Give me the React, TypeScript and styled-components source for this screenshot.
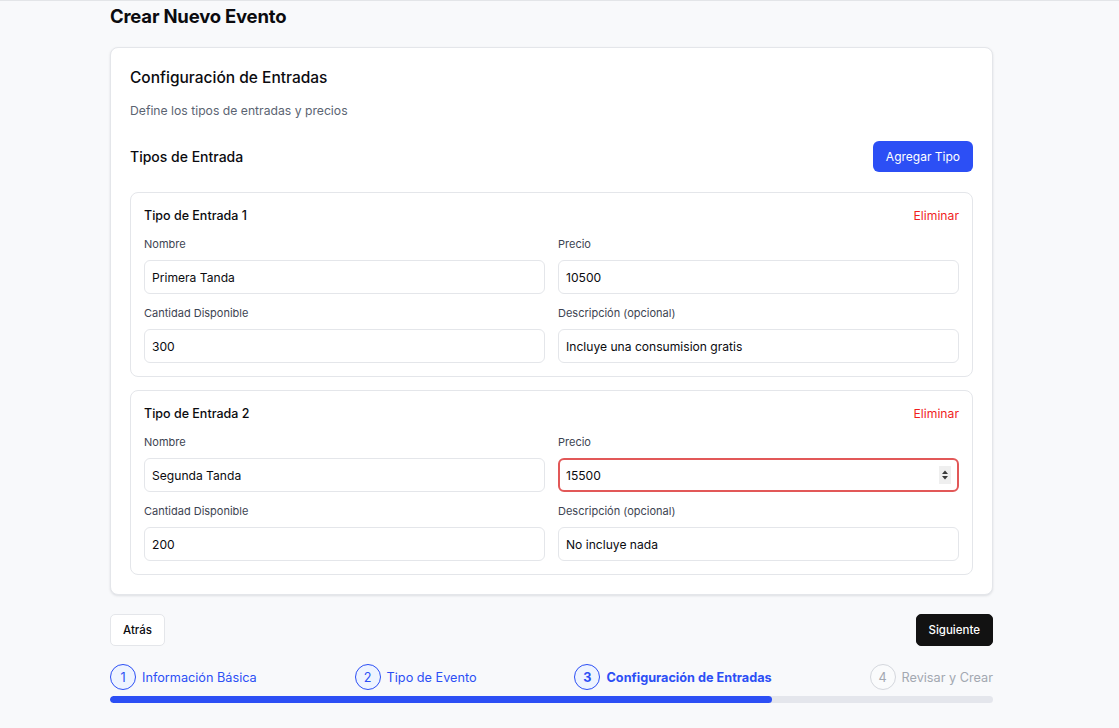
import React from "react";
import styled, { createGlobalStyle } from "styled-components";

const Global = createGlobalStyle`
  html, body { margin: 0; padding: 0; }
  body {
    background: #f8f9fb;
    border-top: 1px solid #e3e5e8;
    font-family: Inter, "Noto Sans", sans-serif;
    color: #0b0b0f;
    -webkit-font-smoothing: antialiased;
  }
  * { box-sizing: border-box; }
`;

const Page = styled.div`
  width: 883px;
  margin-left: 110px;
  padding-top: 1px;
  display: flex;
  flex-direction: column;
`;

const PageTitle = styled.h1`
  margin: 0;
  font-size: 18.5px;
  line-height: 28px;
  font-weight: 700;
  letter-spacing: -0.2px;
  color: #0b0b0f;
`;

const Card = styled.section`
  margin-top: 17px;
  background: #fff;
  border: 1px solid #e4e6ea;
  border-radius: 8px;
  box-shadow: 0 1px 3px rgba(16, 24, 40, 0.08), 0 1px 2px rgba(16, 24, 40, 0.04);
  padding: 19px;
  display: flex;
  flex-direction: column;
`;

const CardTitle = styled.h2`
  margin: 0;
  font-size: 15.5px;
  line-height: 22px;
  font-weight: 500;
  color: #0b0b0f;
`;

const CardSubtitle = styled.p`
  margin: 12px 0 0;
  font-size: 12.2px;
  line-height: 20px;
  color: #5b6472;
`;

const SectionRow = styled.div`
  margin-top: 20px;
  display: flex;
  align-items: center;
  justify-content: space-between;
`;

const SectionTitle = styled.h3`
  margin: 0;
  font-size: 14px;
  font-weight: 500;
  color: #0b0b0f;
`;

const PrimaryButton = styled.button`
  height: 31px;
  padding: 0 13px;
  border: none;
  border-radius: 6px;
  background: #2c4ff5;
  color: #fff;
  font-family: inherit;
  font-size: 12px;
  font-weight: 400;
`;

const TicketList = styled.div`
  margin-top: 20px;
  display: flex;
  flex-direction: column;
  gap: 13px;
`;

const TicketCard = styled.div`
  border: 1px solid #e4e6ea;
  border-radius: 8px;
  padding: 13px;
  display: flex;
  flex-direction: column;
`;

const TicketHeader = styled.div`
  display: flex;
  justify-content: space-between;
  align-items: center;
  height: 18px;
  margin-bottom: 13px;
`;

const TicketTitle = styled.span`
  font-size: 12.5px;
  font-weight: 500;
  color: #0b0b0f;
`;

const DangerLink = styled.button`
  border: none;
  background: none;
  padding: 0;
  font-family: inherit;
  font-size: 12.2px;
  color: #f01e1e;
`;

const FieldGrid = styled.div`
  display: grid;
  grid-template-columns: 1fr 1fr;
  column-gap: 13px;
  row-gap: 12px;
`;

const Field = styled.label`
  display: flex;
  flex-direction: column;
  gap: 8px;
`;

const FieldLabel = styled.span`
  font-size: 11px;
  line-height: 15px;
  font-weight: 400;
  color: #3d4452;
`;

const InputWrap = styled.div`
  position: relative;
`;

const Input = styled.input<{ $invalid?: boolean }>`
  width: 100%;
  height: 34px;
  padding: 0 ${(p) => (p.$invalid ? "6px" : "7px")};
  border: ${(p) => (p.$invalid ? "2px solid #e25858" : "1px solid #e4e6ea")};
  border-radius: 6px;
  background: #fff;
  font-family: inherit;
  font-size: 12.1px;
  color: #0b0b0f;
  outline: none;
`;

const Spinner = styled.span`
  position: absolute;
  right: 8px;
  top: 8px;
  width: 12px;
  height: 18px;
  background: #efefef;
  display: flex;
  align-items: center;
  justify-content: center;
`;

const Actions = styled.div`
  margin-top: 19px;
  display: flex;
  justify-content: space-between;
`;

const ActionButton = styled.button<{ $dark?: boolean }>`
  height: 32px;
  padding: 0 12px;
  border-radius: 5px;
  border: 1px solid ${(p) => (p.$dark ? "#121212" : "#e4e6ea")};
  background: ${(p) => (p.$dark ? "#121212" : "#fff")};
  color: ${(p) => (p.$dark ? "#fff" : "#0b0b0f")};
  font-family: inherit;
  font-size: 11.5px;
  font-weight: 500;
`;

const Steps = styled.div`
  margin-top: 18px;
  display: flex;
  justify-content: space-between;
  align-items: center;
`;

type StepState = "done" | "active" | "todo";

const Step = styled.div`
  display: flex;
  align-items: center;
  gap: 6px;
`;

const StepCircle = styled.span<{ $state: StepState }>`
  width: 26px;
  height: 26px;
  border-radius: 50%;
  border: 1.3px solid ${(p) => (p.$state === "todo" ? "#d4d7dd" : "#2c4ff5")};
  background: ${(p) => (p.$state === "todo" ? "#fafbfc" : "#eef4ff")};
  color: ${(p) => (p.$state === "todo" ? "#a3a8b1" : "#2c4ff5")};
  font-size: 12.7px;
  font-weight: ${(p) => (p.$state === "active" ? 700 : 400)};
  display: flex;
  align-items: center;
  justify-content: center;
`;

const StepLabel = styled.span<{ $state: StepState }>`
  font-size: 12.7px;
  font-weight: ${(p) => (p.$state === "active" ? 700 : 400)};
  color: ${(p) => (p.$state === "todo" ? "#a3a8b1" : "#2c4ff5")};
`;

const Track = styled.div`
  margin-top: 6px;
  height: 7px;
  border-radius: 4px;
  background: #e4e6ec;
  overflow: hidden;
`;

const Fill = styled.div`
  height: 100%;
  border-radius: 4px;
  background: #2c4ff5;
`;

const tickets = [
  { n: 1, nombre: "Primera Tanda", precio: "10500", cantidad: "300", desc: "Incluye una consumision gratis", invalid: false },
  { n: 2, nombre: "Segunda Tanda", precio: "15500", cantidad: "200", desc: "No incluye nada", invalid: true },
];

const steps: { n: number; label: string; state: StepState }[] = [
  { n: 1, label: "Información Básica", state: "done" },
  { n: 2, label: "Tipo de Evento", state: "done" },
  { n: 3, label: "Configuración de Entradas", state: "active" },
  { n: 4, label: "Revisar y Crear", state: "todo" },
];

export default function App() {
  return (
    <>
      <Global />
      <Page>
        <PageTitle>Crear Nuevo Evento</PageTitle>
        <Card>
          <CardTitle>Configuración de Entradas</CardTitle>
          <CardSubtitle>Define los tipos de entradas y precios</CardSubtitle>
          <SectionRow>
            <SectionTitle>Tipos de Entrada</SectionTitle>
            <PrimaryButton>Agregar Tipo</PrimaryButton>
          </SectionRow>
          <TicketList>
            {tickets.map((t) => (
              <TicketCard key={t.n}>
                <TicketHeader>
                  <TicketTitle>Tipo de Entrada {t.n}</TicketTitle>
                  <DangerLink>Eliminar</DangerLink>
                </TicketHeader>
                <FieldGrid>
                  <Field>
                    <FieldLabel>Nombre</FieldLabel>
                    <Input defaultValue={t.nombre} />
                  </Field>
                  <Field>
                    <FieldLabel>Precio</FieldLabel>
                    <InputWrap>
                      <Input defaultValue={t.precio} $invalid={t.invalid} />
                      {t.invalid && (
                        <Spinner>
                          <svg width="8" height="12" viewBox="0 0 8 12">
                            <path d="M4 1.5 L7 5 H1 Z" fill="#3a3a3a" />
                            <path d="M4 10.5 L7 7 H1 Z" fill="#3a3a3a" />
                          </svg>
                        </Spinner>
                      )}
                    </InputWrap>
                  </Field>
                  <Field>
                    <FieldLabel>Cantidad Disponible</FieldLabel>
                    <Input defaultValue={t.cantidad} />
                  </Field>
                  <Field>
                    <FieldLabel>Descripción (opcional)</FieldLabel>
                    <Input defaultValue={t.desc} />
                  </Field>
                </FieldGrid>
              </TicketCard>
            ))}
          </TicketList>
        </Card>
        <Actions>
          <ActionButton>Atrás</ActionButton>
          <ActionButton $dark>Siguiente</ActionButton>
        </Actions>
        <Steps>
          {steps.map((s) => (
            <Step key={s.n}>
              <StepCircle $state={s.state}>{s.n}</StepCircle>
              <StepLabel $state={s.state}>{s.label}</StepLabel>
            </Step>
          ))}
        </Steps>
        <Track>
          <Fill style={{ width: "75%" }} />
        </Track>
      </Page>
    </>
  );
}
